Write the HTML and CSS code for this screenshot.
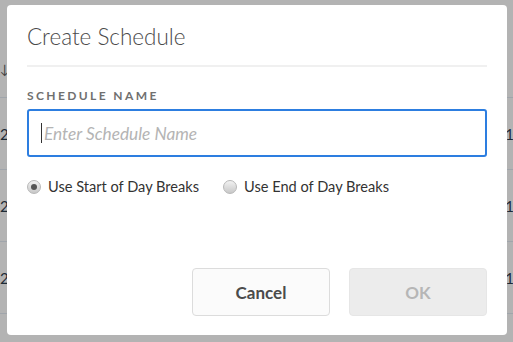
FILE: index.html
```html
<!DOCTYPE html>
<html>
<head>
<meta charset="utf-8">
<link rel="stylesheet" href="styles.css">
</head>
<body>
<div class="page">
  <div class="table">
    <div class="row head"><span class="cell-l sort">↓</span><span class="cell-r"></span></div>
    <div class="row"><span class="cell-l">2</span><span class="cell-r">1</span></div>
    <div class="row"><span class="cell-l">2</span><span class="cell-r">1</span></div>
    <div class="row"><span class="cell-l">2</span><span class="cell-r">1</span></div>
  </div>

  <div class="dialog">
    <h1 class="title">Create Schedule</h1>
    <div class="body">
      <label class="label">Schedule Name</label>
      <div class="input"><span class="caret"></span><span class="placeholder">Enter Schedule Name</span></div>
      <div class="radios">
        <span class="radio-opt"><span class="radio checked"></span>Use Start of Day Breaks</span>
        <span class="radio-opt"><span class="radio"></span>Use End of Day Breaks</span>
      </div>
    </div>
    <div class="footer">
      <button class="btn cancel">Cancel</button>
      <button class="btn ok">OK</button>
    </div>
  </div>
</div>
</body>
</html>
```

FILE: styles.css
```css
* { box-sizing: border-box; }
html, body { margin: 0; padding: 0; }
body {
  width: 513px;
  height: 342px;
  overflow: hidden;
  background: #b3b3b3;
  font-family: Lato, "Open Sans", sans-serif;
}
.page { position: relative; width: 513px; height: 342px; }

.table { display: flex; flex-direction: column; }
.row {
  height: 72px;
  border-bottom: 1px solid #a0a5ab;
  display: flex;
  justify-content: space-between;
  align-items: center;
  font-size: 15px;
  color: #1e2a36;
}
.row.head { height: 98px; align-items: flex-end; padding-bottom: 20px; }
.cell-l { margin-left: 0; }
.cell-r { margin-right: -1px; }
.sort { font-size: 13px; color: #444; }

.dialog {
  position: absolute;
  left: 7px;
  top: 5px;
  width: 500px;
  height: 330px;
  background: #fff;
  border-radius: 4px;
  padding: 0 20px 19px;
  display: flex;
  flex-direction: column;
}
.title {
  margin: 0;
  font-weight: 300;
  font-size: 22.5px;
  color: #4b4b4b;
  height: 62px;
  padding-top: 18px;
  line-height: 28px;
  border-bottom: 2px solid #f0f0f0;
}
.body { display: flex; flex-direction: column; }
.label {
  margin-top: 21px;
  font-size: 12px;
  font-weight: 700;
  letter-spacing: 2.4px;
  text-transform: uppercase;
  color: #707070;
  line-height: 16px;
}
.input {
  margin-top: 5px;
  height: 48px;
  border: 2px solid #2d7ee0;
  border-radius: 3px;
  display: flex;
  align-items: center;
  padding-left: 12px;
}
.caret { width: 1px; height: 20px; background: #333; margin-right: 2px; }
.placeholder { font-style: italic; font-size: 17.3px; color: #b4b4b4; }

.radios {
  margin-top: 21px;
  display: flex;
  gap: 24px;
  font-size: 14.6px;
  color: #333;
}
.radio-opt { display: flex; align-items: center; gap: 7px; }
.radio {
  width: 14px; height: 14px;
  border-radius: 50%;
  background: linear-gradient(#f2f2f2, #c8c8c8);
  border: 1px solid #b8b8b8;
  display: flex; align-items: center; justify-content: center;
}
.radio.checked::after {
  content: "";
  width: 6px; height: 6px;
  border-radius: 50%;
  background: #555;
}

.footer {
  margin-top: auto;
  display: flex;
  justify-content: flex-end;
  gap: 19px;
}
.btn {
  width: 138px;
  height: 48px;
  border-radius: 4px;
  font-family: Lato, "Open Sans", sans-serif;
  font-weight: 700;
  font-size: 17px;
}
.cancel { background: #fbfbfb; border: 1px solid #dcdcdc; color: #4b4b4b; }
.ok { background: #ececec; border: 1px solid #e6e6e6; color: #b6b6b6; }
```
